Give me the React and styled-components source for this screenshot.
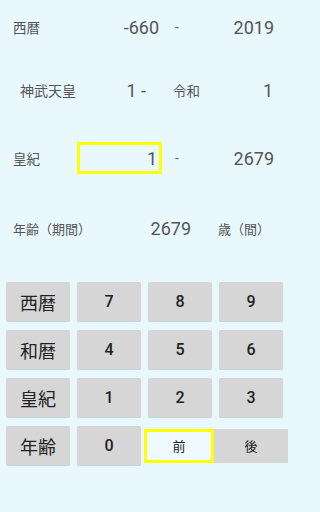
import styled, { createGlobalStyle } from "styled-components";

const Global = createGlobalStyle`
    html, body {
        margin: 0;
        padding: 0;
        background: #e8f8fd;
    }
    body {
        font-family: Roboto, "Noto Sans CJK JP", sans-serif;
    }
`
const Page = styled.div`
    width: 288px;
    height: 512px;
    overflow: hidden;
    background: #e8f8fd;
`
const Display = styled.div`
    display: flex;
    flex-direction: column;
`
const Row = styled.div`
    display: flex;
    align-items: center;
    height: ${(props) => props.$h}px;
`
const Label = styled.div`
    width: ${(props) => props.$w}px;
    padding-left: ${(props) => props.$pad || 0}px;
    box-sizing: border-box;
    font-family: "Noto Sans CJK JP", sans-serif;
    font-size: ${(props) => props.$size || 13}px;
    color: #555;
    white-space: nowrap;
`
const Value = styled.div`
    width: ${(props) => props.$w}px;
    text-align: right;
    font-family: Roboto, sans-serif;
    font-size: 18px;
    color: #555;
    white-space: pre;
`
const Sep = styled.div`
    width: ${(props) => props.$w}px;
    padding-left: ${(props) => props.$pad}px;
    box-sizing: border-box;
    font-family: Roboto, sans-serif;
    font-size: 14px;
    color: #666;
`
const Input = styled.div`
    width: 85px;
    height: 32px;
    box-sizing: border-box;
    border: 3px solid #ffff00;
    padding-right: 2px;
    display: flex;
    align-items: center;
    justify-content: flex-end;
    font-family: Roboto, sans-serif;
    font-size: 18px;
    color: #555;
`
const Keypad = styled.div`
    display: grid;
    grid-template-columns: repeat(4, 64px);
    grid-auto-rows: 39px;
    column-gap: 7px;
    row-gap: 9px;
    padding: 16px 0 0 6px;
`
const Key = styled.button`
    border: none;
    border-radius: 2px;
    background: #d6d6d6;
    box-shadow: 0 1px 1px rgba(0, 0, 0, 0.15);
    font-family: ${(props) => props.$kanji ? '"Noto Sans CJK JP", sans-serif' : 'Roboto, sans-serif'};
    font-size: ${(props) => props.$kanji ? 18 : 16}px;
    font-weight: ${(props) => props.$kanji ? 400 : 500};
    color: #222;
    padding: 0;
`
const Toggle = styled.div`
    grid-column: span 2;
    display: flex;
    align-items: center;
    margin-left: -4px;
    margin-right: -9px;
`
const ToggleBtn = styled.div`
    width: ${(props) => props.$w}px;
    height: 34px;
    box-sizing: border-box;
    display: flex;
    align-items: center;
    justify-content: center;
    font-family: "Noto Sans CJK JP", sans-serif;
    font-size: 13px;
    color: #222;
    background: ${(props) => props.$active ? '#eefaff' : '#d6d6d6'};
    border: ${(props) => props.$active ? '3px solid #ffff00' : 'none'};
`

const keys = [
    ['西暦', '7', '8', '9'],
    ['和暦', '4', '5', '6'],
    ['皇紀', '1', '2', '3'],
]

const App = () => {
    return(
        <>
            <Global/>
            <Page>
                <Display>
                    <Row $h={54}>
                        <Label $w={77} $pad={13} $size={13.5}>西暦</Label>
                        <Value $w={82}>-660</Value>
                        <Sep $w={56} $pad={16}>-</Sep>
                        <Value $w={59}>2019</Value>
                    </Row>
                    <Row $h={72}>
                        <Label $w={77} $pad={20} $size={14}>神武天皇</Label>
                        <Value $w={69}>1 -</Value>
                        <Label $w={69} $pad={27} $size={13.5}>令和</Label>
                        <Value $w={58}>1</Value>
                    </Row>
                    <Row $h={64}>
                        <Label $w={77} $pad={13} $size={13.5}>皇紀</Label>
                        <Input>1</Input>
                        <Sep $w={53} $pad={13}>-</Sep>
                        <Value $w={59}>2679</Value>
                    </Row>
                    <Row $h={76}>
                        <Label $w={77} $pad={13}>年齢（期間）</Label>
                        <Value $w={114}>2679</Value>
                        <Label $w={90} $pad={27}>歳（間）</Label>
                    </Row>
                </Display>
                <Keypad>
                    {keys.map((row) => row.map((k, idx) =>
                        <Key key={k} $kanji={idx === 0}>{k}</Key>
                    ))}
                    <Key $kanji>年齢</Key>
                    <Key>0</Key>
                    <Toggle>
                        <ToggleBtn $w={70} $active>前</ToggleBtn>
                        <ToggleBtn $w={74}>後</ToggleBtn>
                    </Toggle>
                </Keypad>
            </Page>
        </>
    )
}

export default App;
